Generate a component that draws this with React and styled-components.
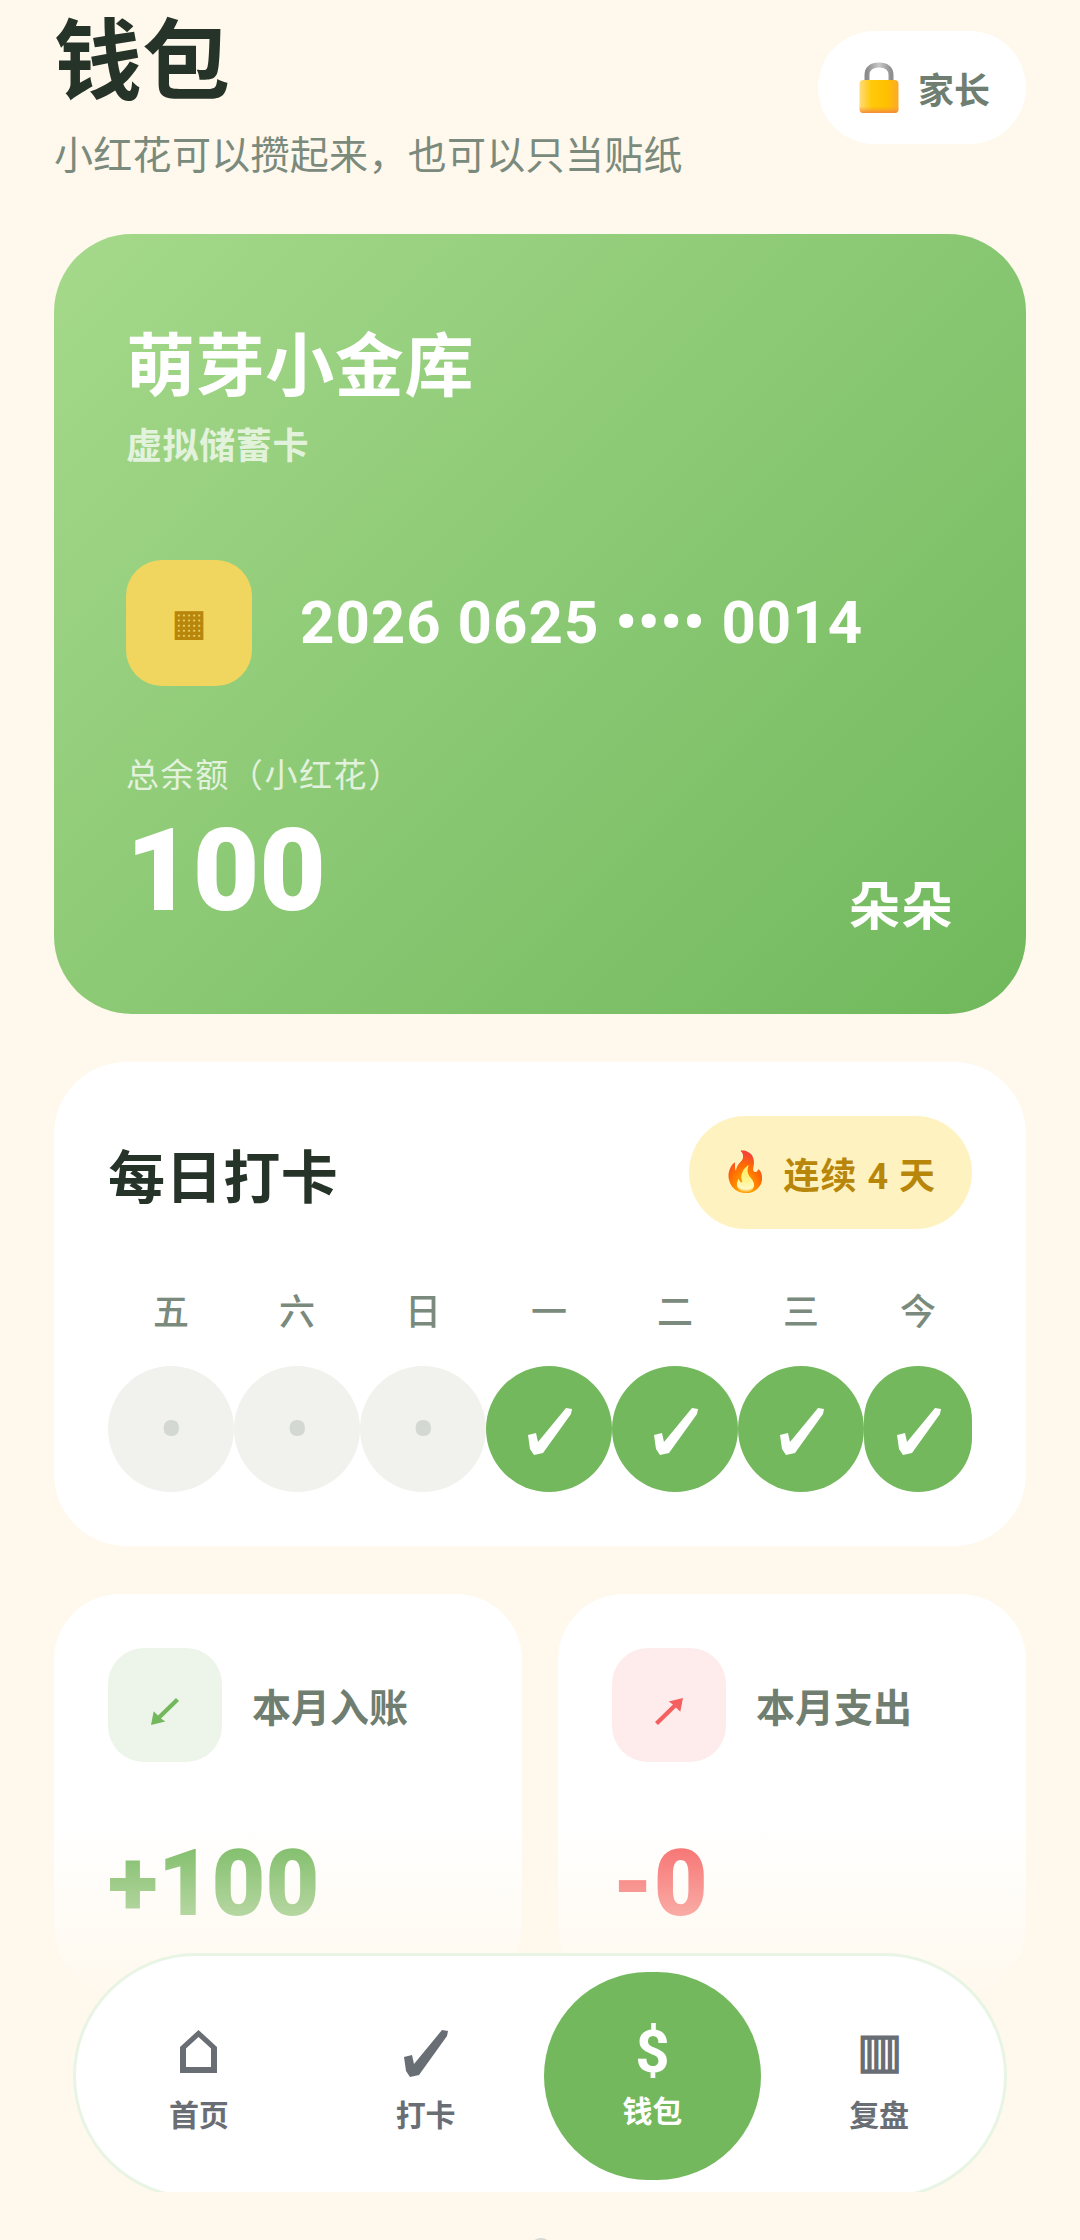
import React from 'react';
import styled, { createGlobalStyle } from 'styled-components';

const FONT = `Roboto, "Noto Sans CJK SC", sans-serif`;
const GLYPH_FONT = `Roboto, sans-serif`;

const Global = createGlobalStyle`
  html, body { margin: 0; padding: 0; background: #fff8ec; }
  body { font-family: ${FONT}; }
  * { box-sizing: border-box; }
`;

const Page = styled.div`
  position: relative;
  width: 1080px;
  height: 2240px;
  overflow: hidden;
  background: #fff8ec;
`;
const Scroll = styled.main`
  display: flex;
  flex-direction: column;
  padding: 0 54px;
`;
const Header = styled.header`
  display: flex;
  justify-content: space-between;
  align-items: flex-start;
  height: 234px;
`;
const TitleBlock = styled.div`
  display: flex;
  flex-direction: column;
`;
const PageTitle = styled.h1`
  margin: 0;
  font-size: 88px;
  line-height: 124px;
  font-weight: 700;
  color: #263328;
`;
const Subtitle = styled.p`
  margin: 2px 0 0;
  font-size: 39px;
  line-height: 60px;
  letter-spacing: 0.3px;
  color: #7a8a7c;
`;
const ParentButton = styled.button`
  margin-top: 31px;
  display: flex;
  align-items: center;
  gap: 19px;
  height: 113px;
  width: 208px;
  padding: 0 0 0 41px;
  border: 0;
  border-radius: 57px;
  background: #fff;
  font: 600 36px ${FONT};
  color: #6f7e70;
`;
const Emoji = styled.span`
  font-size: ${p => p.$size}px;
  line-height: 1;
  font-weight: 400;
`;

const BankCard = styled.section`
  display: flex;
  flex-direction: column;
  height: 780px;
  padding: 92px 72px 0;
  border-radius: 78px;
  background: linear-gradient(135deg, #a5d98b 0%, #70b85c 100%);
  color: #fff;
`;
const CardTitle = styled.h2`
  margin: 0;
  font-size: 69px;
  line-height: 84px;
  letter-spacing: 0.6px;
  font-weight: 600;
`;
const CardSub = styled.div`
  margin-top: 10px;
  font-size: 36px;
  line-height: 54px;
  letter-spacing: 0.6px;
  font-weight: 600;
  opacity: 0.72;
`;
const ChipRow = styled.div`
  display: flex;
  align-items: center;
  gap: 48px;
  margin-top: 86px;
`;
const Chip = styled.div`
  display: flex;
  align-items: center;
  justify-content: center;
  width: 126px;
  height: 126px;
  border-radius: 36px;
  background: #f0d65f;
  color: #b8860b;
  font: 700 36px ${GLYPH_FONT};
`;
const CardNumber = styled.div`
  font-size: 60px;
  line-height: 68px;
  font-weight: 700;
  letter-spacing: 1px;
`;
const BalanceRow = styled.div`
  display: flex;
  justify-content: space-between;
  align-items: flex-end;
  margin-top: 66px;
`;
const BalanceLabel = styled.div`
  font-size: 33px;
  line-height: 48px;
  letter-spacing: 1.6px;
  opacity: 0.75;
`;
const BalanceValue = styled.div`
  margin-top: 6px;
  font-size: 115px;
  line-height: 130px;
  font-weight: 900;
`;
const Holder = styled.div`
  margin-bottom: 2px;
  font-size: 51px;
  line-height: 52px;
  letter-spacing: 1.5px;
  font-weight: 700;
`;

const Panel = styled.section`
  margin-top: 48px;
  padding: 54px;
  height: 484px;
  border-radius: 72px;
  background: #fff;
`;
const PanelHead = styled.div`
  display: flex;
  justify-content: space-between;
  align-items: center;
`;
const PanelTitle = styled.h2`
  margin: 0;
  font-size: 57px;
  letter-spacing: 0.6px;
  font-weight: 600;
  color: #263328;
`;
const Streak = styled.div`
  display: flex;
  align-items: center;
  gap: 12px;
  height: 113px;
  padding: 0 36px 0 32px;
  border-radius: 57px;
  background: #fef3c0;
  color: #b8860b;
  font-size: 36px;
  letter-spacing: 1px;
  font-weight: 700;
`;
const Days = styled.div`
  display: flex;
  width: 864px;
  margin-top: 57px;
`;
const Day = styled.div`
  display: flex;
  flex-direction: column;
  align-items: center;
  width: ${p => (p.$narrow ? 108 : 126)}px;
`;
const DayLabel = styled.div`
  font-size: 36px;
  line-height: 54px;
  font-weight: 500;
  color: #7a8a7c;
`;
const DayMark = styled.div`
  display: flex;
  align-items: center;
  justify-content: center;
  width: 100%;
  height: 126px;
  margin-top: 26px;
  border-radius: 63px;
  background: ${p => (p.$done ? '#73b85d' : '#f1f2ee')};
  color: ${p => (p.$done ? '#fff' : '#d3d8d3')};
  font: 700 66px ${GLYPH_FONT};
`;

const Stats = styled.div`
  display: grid;
  grid-template-columns: 1fr 1fr;
  gap: 36px;
  margin-top: 48px;
`;
const StatCard = styled.section`
  height: 400px;
  padding: 54px;
  border-radius: 66px;
  background: #fff;
`;
const StatHead = styled.div`
  display: flex;
  align-items: center;
  gap: 30px;
`;
const StatIcon = styled.div`
  display: flex;
  align-items: center;
  justify-content: center;
  width: 114px;
  height: 114px;
  padding-top: 12px;
  border-radius: 36px;
  background: ${p => (p.$out ? '#feecec' : '#edf5ea')};
  color: ${p => (p.$out ? '#f4605f' : '#73b85d')};
`;
const StatLabel = styled.div`
  font-size: 39px;
  font-weight: 600;
  color: #6f7e70;
`;
const StatValue = styled.div`
  margin-top: 62px;
  font-size: 93px;
  line-height: 120px;
  font-weight: 900;
  color: ${p => (p.$out ? '#f56565' : '#73b85d')};
`;

const Fade = styled.div`
  position: absolute;
  left: 0;
  right: 0;
  top: 1825px;
  height: 190px;
  background: linear-gradient(to bottom, rgba(255, 248, 236, 0), #fff8ec);
`;
const Nav = styled.nav`
  position: absolute;
  left: 73px;
  top: 1953px;
  display: grid;
  grid-template-columns: repeat(4, 1fr);
  gap: 9px;
  width: 934px;
  height: 246px;
  padding: 16px 16px 16px 14px;
  border: 3px solid #e8f5e4;
  border-radius: 123px;
  background: #fff;
`;
const NavItem = styled.div`
  display: flex;
  flex-direction: column;
  align-items: center;
  justify-content: center;
  padding-bottom: ${p => (p.$active ? 4 : 0)}px;
  border-radius: 108px;
  background: ${p => (p.$active ? '#73b85d' : 'transparent')};
  color: ${p => (p.$active ? '#fff' : '#696e75')};
`;
const NavGlyph = styled.div`
  display: flex;
  align-items: center;
  justify-content: center;
  height: 72px;
  font: 700 ${p => p.$size}px/72px ${GLYPH_FONT};
`;
const NavLabel = styled.div`
  margin-top: ${p => (p.$active ? 3 : 8)}px;
  font-size: 30px;
  line-height: 42px;
  font-weight: 600;
`;
const BottomCover = styled.div`
  position: absolute;
  left: 0;
  right: 0;
  top: 2192px;
  bottom: 0;
  background: #fff8ec;
`;
const Peek = styled.div`
  position: absolute;
  left: 530px;
  top: 2238px;
  width: 22px;
  height: 22px;
  border-radius: 50%;
  background: #d8d8d4;
`;

const HomeIcon = () => (
  <svg width="37" height="43" viewBox="0 0 37 43" fill="currentColor">
    <path fillRule="evenodd" d="M18.5 0 L37 17 V43 H0 V17 Z M18.5 7 L6 18.5 V37 H31 V18.5 Z" />
  </svg>
);

const CheckIcon = () => (
  <svg width="45" height="48" viewBox="0 0 45 48" fill="currentColor" style={{ marginTop: 3 }}>
    <path d="M1 28 L9 26 L11 35 L39 1 L45 2 L44 7 L16 46 L7 48 L3 42 Z" />
  </svg>
);

const Arrow = ({ up }) => (
  <svg width="28" height="27" viewBox="0 0 28 27" fill="currentColor" style={up ? { transform: 'rotate(180deg)' } : undefined}>
    <path d="M0 27 L2.7 13.3 L7 17.6 L25 0 L28 3 L10 20.6 L14.3 23.5 Z" />
  </svg>
);

const LockIcon = () => (
  <svg width="40" height="51" viewBox="0 0 40 51">
    <defs>
      <linearGradient id="lockBody" x1="0" y1="0" x2="1" y2="0">
        <stop offset="0" stopColor="#ffdc7a" />
        <stop offset="0.3" stopColor="#ffc90a" />
        <stop offset="0.7" stopColor="#ffc000" />
        <stop offset="1" stopColor="#fba92a" />
      </linearGradient>
      <linearGradient id="lockEdge" x1="0" y1="0" x2="0" y2="1">
        <stop offset="0.8" stopColor="#f79a34" stopOpacity="0" />
        <stop offset="1" stopColor="#f3893c" />
      </linearGradient>
      <linearGradient id="lockBar" x1="0" y1="0" x2="1" y2="0">
        <stop offset="0" stopColor="#8b8b8b" />
        <stop offset="0.5" stopColor="#c9c9c9" />
        <stop offset="1" stopColor="#8f8f8f" />
      </linearGradient>
    </defs>
    <path d="M8 20 V13 C8 6 13 3 20 3 C27 3 32 6 32 13 V20" fill="none" stroke="url(#lockBar)" strokeWidth="5" />
    <rect x="0.5" y="18" width="39" height="33" rx="4" fill="url(#lockBody)" />
    <rect x="0.5" y="18" width="39" height="33" rx="4" fill="url(#lockEdge)" />
  </svg>
);

const days = [
  ['五', false], ['六', false], ['日', false],
  ['一', true], ['二', true], ['三', true], ['今', true],
];
const nav = [
  { key: 'home', glyph: <HomeIcon />, label: '首页' },
  { key: 'check', glyph: <CheckIcon />, label: '打卡' },
  { key: 'wallet', glyph: '$', size: 60, label: '钱包', active: true },
  { key: 'review', glyph: '▥', size: 48, label: '复盘' },
];

export default function App() {
  return (
    <Page>
      <Global />
      <Scroll>
        <Header>
          <TitleBlock>
            <PageTitle>钱包</PageTitle>
            <Subtitle>小红花可以攒起来，也可以只当贴纸</Subtitle>
          </TitleBlock>
          <ParentButton><LockIcon />家长</ParentButton>
        </Header>

        <BankCard>
          <CardTitle>萌芽小金库</CardTitle>
          <CardSub>虚拟储蓄卡</CardSub>
          <ChipRow>
            <Chip>▦</Chip>
            <CardNumber>2026 0625 •••• 0014</CardNumber>
          </ChipRow>
          <BalanceRow>
            <div>
              <BalanceLabel>总余额（小红花）</BalanceLabel>
              <BalanceValue>100</BalanceValue>
            </div>
            <Holder>朵朵</Holder>
          </BalanceRow>
        </BankCard>

        <Panel>
          <PanelHead>
            <PanelTitle>每日打卡</PanelTitle>
            <Streak><Emoji $size={39}>🔥</Emoji>连续 4 天</Streak>
          </PanelHead>
          <Days>
            {days.map(([label, done], i) => (
              <Day key={label} $narrow={i === 6}>
                <DayLabel>{label}</DayLabel>
                <DayMark $done={done}>{done ? <CheckIcon /> : '•'}</DayMark>
              </Day>
            ))}
          </Days>
        </Panel>

        <Stats>
          <StatCard>
            <StatHead>
              <StatIcon><Arrow /></StatIcon>
              <StatLabel>本月入账</StatLabel>
            </StatHead>
            <StatValue>+100</StatValue>
          </StatCard>
          <StatCard>
            <StatHead>
              <StatIcon $out><Arrow up /></StatIcon>
              <StatLabel>本月支出</StatLabel>
            </StatHead>
            <StatValue $out>-0</StatValue>
          </StatCard>
        </Stats>
      </Scroll>

      <Fade />
      <Nav>
        {nav.map(({ key, glyph, size, label, active }) => (
          <NavItem key={key} $active={active}>
            <NavGlyph $size={size}>{glyph}</NavGlyph>
            <NavLabel $active={active}>{label}</NavLabel>
          </NavItem>
        ))}
      </Nav>
      <BottomCover />
      <Peek />
    </Page>
  );
}
